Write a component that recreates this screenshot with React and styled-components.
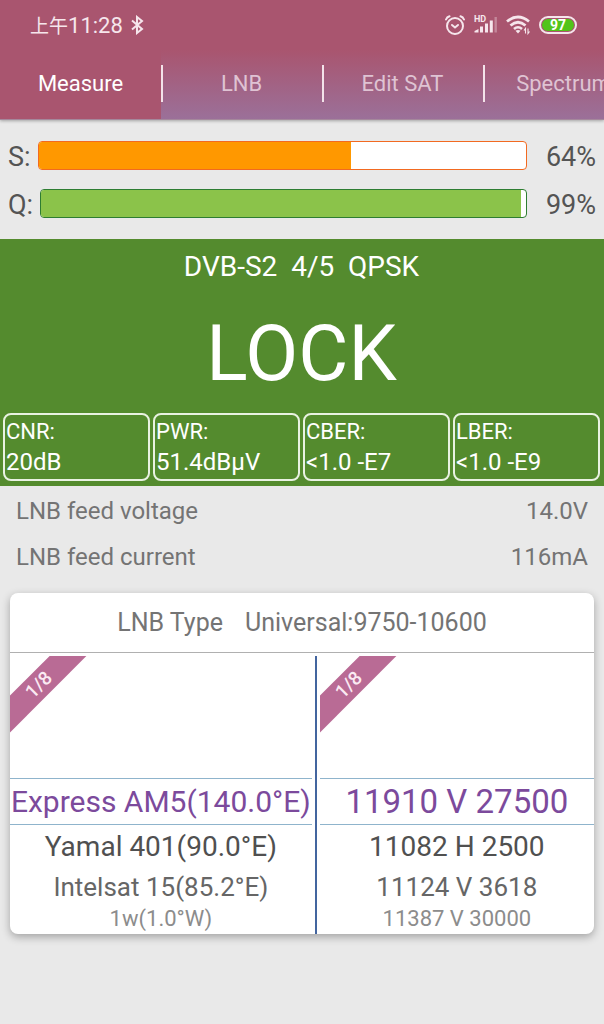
import React, { useState } from 'react';
import styled, { createGlobalStyle } from 'styled-components';

const color = {
  header: '#a9556f',
  headerEnd: '#9b7099',
  page: '#e9e9e9',
  lock: '#548b2e',
  text: '#545454',
  label: '#747474',
  selected: '#7c4a9c',
  ribbon: '#b96b95',
  wheelLine: '#8fb4cc',
  split: '#43659f',
};

const GlobalStyle = createGlobalStyle`
  * {
    box-sizing: border-box;
  }

  body {
    margin: 0;
    min-height: 100vh;
    background-color: ${color.page};
    font-family: Roboto, 'Noto Sans CJK SC', sans-serif;
    color: ${color.text};
    overflow-x: hidden;
  }

  button {
    padding: 0;
    border: none;
    background-color: transparent;
    font-family: inherit;
    color: inherit;
    cursor: pointer;
  }
`;

const Header = styled.header`
  position: relative;
  height: 120px;
  background-image: linear-gradient(${color.header} 42%, ${color.headerEnd});
  border-bottom: 1px solid #a5889c;
  box-shadow: 0 1px 3px rgba(0, 0, 0, 0.3);
  overflow: hidden;
`;

const StatusBar = styled.div`
  height: 48px;
  padding: 2px 27px 0 30px;
  display: flex;
  align-items: center;
  color: #f6e6ec;
`;

const Clock = styled.span`
  margin-right: 8px;
  padding-top: 2px;
  font-size: 22px;
  line-height: 24px;
`;

const ChineseHour = styled.span`
  font-size: 19px;
`;

const StatusIcons = styled.div`
  margin-left: auto;
  display: flex;
  align-items: center;
  gap: 9px;
`;

const Battery = styled.div`
  width: 38px;
  height: 18px;
  padding: 1px;
  border: 2px solid #f6e6ec;
  border-radius: 9px;
`;

const BatteryLevel = styled.div`
  height: 12px;
  border-radius: 6px;
  background-color: #52c41a;
  color: #fff;
  font-size: 14px;
  font-weight: 700;
  line-height: 13px;
  text-align: center;
`;

const Tabs = styled.nav`
  height: 71px;
  display: flex;
`;

const Tab = styled.button`
  flex: 0 0 161px;
  display: flex;
  align-items: center;
  background-color: ${(props) => (props.$selected ? color.header : 'transparent')};
  color: ${(props) => (props.$selected ? '#fff' : '#dfc3d3')};
  font-size: 22px;
`;

const TabName = styled.span`
  flex: 1;
  text-align: center;
`;

const TabDivider = styled.span`
  width: 2px;
  height: 37px;
  margin-right: -2px;
  background-color: #f3e3ea;
  z-index: 1;
`;

const Meters = styled.section`
  padding: 12px 0 11px;
`;

const MeterRow = styled.div`
  height: 48px;
  padding: 0 8px;
  display: flex;
  align-items: center;
  font-size: 27px;
  line-height: 32px;
`;

const MeterName = styled.span`
  padding-top: 2px;
`;

const MeterBar = styled.div`
  flex: 1;
  height: 29px;
  margin-left: 7px;
  margin-bottom: 1px;
  border: 1px solid ${(props) => props.$border};
  border-radius: 4px;
  background-color: #fff;
  overflow: hidden;
`;

const MeterFill = styled.div`
  height: 100%;
  background-color: ${(props) => props.$fill};
`;

const MeterValue = styled.span`
  width: 69px;
  padding-top: 2px;
  text-align: right;
`;

const LockPanel = styled.section`
  padding: 0 4px 5px 3px;
  background-color: ${color.lock};
  color: #fff;
`;

const Modulation = styled.div`
  font-size: 28px;
  line-height: 56px;
  text-align: center;
  white-space: pre;
`;

const LockState = styled.h1`
  margin: 0;
  font-size: 77px;
  font-weight: 400;
  line-height: 118px;
  text-align: center;
`;

const Readings = styled.div`
  display: grid;
  grid-template-columns: repeat(4, 1fr);
  gap: 3px;
`;

const Reading = styled.div`
  height: 68px;
  padding-left: 1px;
  border: 2px solid #e9f2e2;
  border-radius: 8px;
  font-size: 24px;
  line-height: 30px;
  white-space: nowrap;
`;

const ReadingName = styled.div`
  padding-top: 2px;
  font-size: 22px;
`;

const Feed = styled.dl`
  margin: 0;
  padding: 2px 16px 0;
  color: ${color.label};
`;

const FeedRow = styled.div`
  display: flex;
  justify-content: space-between;
  font-size: 24px;
  line-height: 46px;
`;

const FeedValue = styled.dd`
  margin: 0;
`;

const Card = styled.section`
  margin: 13px 10px 0;
  border-radius: 8px;
  background-color: #fff;
  box-shadow: 0 3px 8px rgba(0, 0, 0, 0.3);
  overflow: hidden;
`;

const LnbType = styled.button`
  width: 100%;
  height: 60px;
  display: flex;
  align-items: center;
  justify-content: center;
  gap: 22px;
  border-bottom: 1px solid #b0b0b0;
  color: ${color.label};
  font-size: 25px;
`;

const Wheels = styled.div`
  padding-top: 3px;
  display: grid;
  grid-template-columns: minmax(0, 11fr) 8px minmax(0, 10fr);
`;

const Split = styled.div`
  width: 2px;
  margin: 0 auto;
  background-color: ${color.split};
`;

const Wheel = styled.div`
  position: relative;
  padding-top: 122px;
  padding-bottom: 1px;
  display: flex;
  flex-direction: column;
`;

const RibbonCorner = styled.div`
  position: absolute;
  top: 0;
  left: 0;
  width: 77px;
  height: 77px;
  overflow: hidden;
`;

const Ribbon = styled.div`
  position: absolute;
  top: 16px;
  left: -26px;
  width: 110px;
  height: 26px;
  background-color: ${color.ribbon};
  color: #fbeaf3;
  font-size: 19px;
  font-weight: 500;
  line-height: 26px;
  text-align: center;
  transform: rotate(-45deg);
`;

const WheelItem = styled.button`
  height: ${(props) => props.$height}px;
  color: ${(props) => props.$color};
  font-size: ${(props) => props.$size}px;
  line-height: 1;
  white-space: nowrap;
`;

const SelectedItem = styled(WheelItem)`
  border-top: 1px solid ${color.wheelLine};
  border-bottom: 1px solid ${color.wheelLine};
`;

// rows get lower and fainter as the wheel turns away
const ROWS = [
  { height: 44, color: '#505050', size: 28 },
  { height: 36, color: '#666', size: 26 },
  { height: 28, color: '#8c8c8c', size: 22 },
];

const TABS = ['Measure', 'LNB', 'Edit SAT', 'Spectrum'];

const READINGS = [
  ['CNR:', '20dB'],
  ['PWR:', '51.4dBμV'],
  ['CBER:', '<1.0 -E7'],
  ['LBER:', '<1.0 -E9'],
];

function BluetoothIcon() {
  return (
    <svg width="13" height="20" viewBox="0 0 13 20" fill="none" stroke="currentColor" strokeWidth="2">
      <path d="M1 5.5 L11 14 L6 18 V2 L11 6 L1 14.5" />
    </svg>
  );
}

function AlarmIcon() {
  return (
    <svg width="20" height="20" viewBox="0 0 20 20" fill="none" stroke="currentColor" strokeWidth="2" strokeLinecap="round">
      <circle cx="10" cy="11" r="8" />
      <path d="M7 10 L10 12.5 L13 10" />
      <path d="M1 4.5 Q2 2 4.5 1.3 M19 4.5 Q18 2 15.5 1.3" />
    </svg>
  );
}

function SignalIcon() {
  return (
    <svg width="23" height="20" viewBox="0 0 23 20" fill="currentColor">
      <text x="0" y="7" fontSize="9" fontWeight="700">HD</text>
      <path d="M0.5 17.5 V16 L4.5 14 V17.5 Z M6 11.5 h3 V17.5 h-3 Z M11 8.5 h3 V17.5 h-3 Z M15.8 5.5 h3 V17.5 h-3 Z" />
      <path d="M20.5 2 h2.4 V17.5 h-2.4 Z" opacity="0.35" />
    </svg>
  );
}

function WifiIcon() {
  return (
    <svg width="24" height="20" viewBox="0 0 24 20" fill="none" stroke="currentColor">
      <path d="M1 6.5 Q12 -2.5 23 6.5" strokeWidth="2.8" />
      <path d="M4.5 10.5 Q12 4 19.5 10.5" strokeWidth="2.8" />
      <path d="M8 14 Q12 10.5 16 14" strokeWidth="2.6" />
      <path d="M9.5 15.8 Q12 14 14.5 15.8 L12 18.5 Z" fill="currentColor" stroke="none" />
      <path d="M19.5 18.5 V13.5 L18 15.5 M22 13.5 V18.5 L23.5 16.5" strokeWidth="1.1" />
    </svg>
  );
}

function Meter({ name, value, border, fill }) {
  return (
    <MeterRow>
      <MeterName>{`${name}:`}</MeterName>
      <MeterBar
        $border={border}
        role="progressbar"
        aria-label={name}
        aria-valuenow={value}
      >
        <MeterFill $fill={fill} style={{ width: `${value}%` }} />
      </MeterBar>
      <MeterValue>{`${value}%`}</MeterValue>
    </MeterRow>
  );
}

function Picker({ position, items, size }) {
  const [selected, ...rest] = items;

  return (
    <Wheel>
      <RibbonCorner>
        <Ribbon>{position}</Ribbon>
      </RibbonCorner>
      <SelectedItem type="button" $height={47} $color={color.selected} $size={size}>
        {selected}
      </SelectedItem>
      { rest.map((item, i) => (
        <WheelItem
          key={item}
          type="button"
          $height={ROWS[i].height}
          $color={ROWS[i].color}
          $size={ROWS[i].size}
        >
          {item}
        </WheelItem>
      )) }
    </Wheel>
  );
}

export default function App() {
  const [activeTab, setActiveTab] = useState('Measure');

  return (
    <>
      <GlobalStyle />
      <Header>
        <StatusBar>
          <Clock>
            <ChineseHour>上午</ChineseHour>
            11:28
          </Clock>
          <BluetoothIcon />
          <StatusIcons>
            <AlarmIcon />
            <SignalIcon />
            <WifiIcon />
            <Battery>
              <BatteryLevel>97</BatteryLevel>
            </Battery>
          </StatusIcons>
        </StatusBar>
        <Tabs>
          { TABS.map((tab, i) => (
            <Tab
              key={tab}
              type="button"
              $selected={tab === activeTab}
              onClick={() => setActiveTab(tab)}
            >
              <TabName>{tab}</TabName>
              { i < TABS.length - 1 && <TabDivider /> }
            </Tab>
          )) }
        </Tabs>
      </Header>
      <main>
        <Meters>
          <Meter name="S" value={64} border="#f26a21" fill="#ff9800" />
          <Meter name="Q" value={99} border="#2e7d32" fill="#8bc34a" />
        </Meters>
        <LockPanel>
          <Modulation>DVB-S2  4/5  QPSK</Modulation>
          <LockState>LOCK</LockState>
          <Readings>
            { READINGS.map(([name, value]) => (
              <Reading key={name}>
                <ReadingName>{name}</ReadingName>
                <div>{value}</div>
              </Reading>
            )) }
          </Readings>
        </LockPanel>
        <Feed>
          <FeedRow>
            <dt>LNB feed voltage</dt>
            <FeedValue>14.0V</FeedValue>
          </FeedRow>
          <FeedRow>
            <dt>LNB feed current</dt>
            <FeedValue>116mA</FeedValue>
          </FeedRow>
        </Feed>
        <Card>
          <LnbType type="button">
            <span>LNB Type</span>
            <span>Universal:9750-10600</span>
          </LnbType>
          <Wheels>
            <Picker
              position="1/8"
              size={30}
              items={['Express AM5(140.0°E)', 'Yamal 401(90.0°E)', 'Intelsat 15(85.2°E)', '1w(1.0°W)']}
            />
            <Split />
            <Picker
              position="1/8"
              size={33}
              items={['11910 V 27500', '11082 H 2500', '11124 V 3618', '11387 V 30000']}
            />
          </Wheels>
        </Card>
      </main>
    </>
  );
}
